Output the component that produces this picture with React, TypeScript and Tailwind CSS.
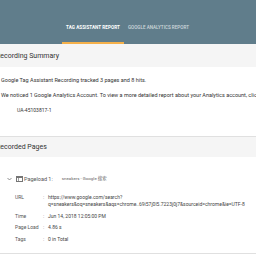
const ROWS = [
  { label: "Time", value: "Jun 14, 2018 12:05:00 PM" },
  { label: "Page Load", value: "4.86 s" },
  { label: "Tags", value: "0 in Total" },
];

function DocIcon() {
  return (
    <svg width="7" height="6" viewBox="0 0 7 6" className="shrink-0">
      <rect x="0.5" y="0.5" width="6" height="5" fill="none" stroke="#757575" strokeWidth="1" />
      <rect x="1" y="1" width="5" height="1" fill="#757575" />
      <rect x="2" y="2" width="1" height="3" fill="#9e9e9e" />
    </svg>
  );
}

export default function App() {
  return (
    <div className="h-[256px] w-[256px] overflow-hidden bg-white font-['Roboto',sans-serif] text-[#333]">
      {/* header tabs */}
      <div className="flex h-[44px] items-end bg-[#607d8b] pl-[62px]">
        <div className="flex h-[30px] items-center border-b-2 border-[#f4b04a] px-[4px] text-[4.6px] font-bold tracking-[0.05px] text-white">
          TAG ASSISTANT REPORT
        </div>
        <div className="flex h-[30px] items-center px-[4px] pb-[2px] text-[4.6px] font-medium text-[#cfd8dc]">
          GOOGLE ANALYTICS REPORT
        </div>
      </div>

      {/* recording summary */}
      <div className="flex h-[23px] items-center bg-[#f5f5f5] pt-[2px]">
        <span className="ml-[-4px] whitespace-nowrap text-[7px]">Recording Summary</span>
      </div>
      <div className="pb-[20px] pl-[1px] pt-[8px] text-[5.5px] whitespace-nowrap">
        <div className="flex h-[10px] items-center">Google Tag Assistant Recording tracked 3 pages and 8 hits.</div>
        <div className="mt-[5px] flex h-[10px] items-center">
          We noticed 1 Google Analytics Account. To view a more detailed report about your Analytics account, click
        </div>
        <div className="mt-[6px] flex h-[10px] items-center pl-[16px] text-[5px]">UA-45103817-1</div>
      </div>

      {/* recorded pages */}
      <div className="flex h-[21px] items-center border-t border-[#e0e0e0] bg-[#f5f5f5]">
        <span className="ml-[-4px] whitespace-nowrap text-[7px]">Recorded Pages</span>
      </div>
      <div className="border-b border-[#e0e0e0] pb-[10px] whitespace-nowrap">
        <div className="mt-[17px] flex h-[10px] items-center pl-[7px]">
          <svg width="5" height="4" viewBox="0 0 5 4" className="mr-[4px]">
            <path d="M0.5 1L2.5 3L4.5 1" fill="none" stroke="#757575" strokeWidth="0.8" />
          </svg>
          <DocIcon />
          <span className="ml-[1px] text-[5.5px] text-[#555]">Pageload 1:</span>
          <span className="ml-[9px] text-[4.4px] text-[#666] font-['Roboto','Noto_Sans_CJK_SC',sans-serif]">sneakers - Google 搜索</span>
        </div>
        <div className="mt-[10px] flex text-[5px] leading-[7px]">
          <div className="w-[28px] shrink-0 pl-[15px] box-content text-[#555]">URL</div>
          <div className="w-[5px] shrink-0 text-[#777]">:</div>
          <div className="text-[#444]">
            <div>https://www.google.com/search?</div>
            <div>q=sneakers&amp;oq=sneakers&amp;aqs=chrome..69i57j0l5.7223j0j7&amp;sourceid=chrome&amp;ie=UTF-8</div>
          </div>
        </div>
        {ROWS.map((r) => (
          <div key={r.label} className="mt-[4.5px] flex text-[5px] leading-[7px]">
            <div className="w-[28px] shrink-0 pl-[15px] box-content text-[#555]">{r.label}</div>
            <div className="w-[5px] shrink-0 text-[#777]">:</div>
            <div className="text-[#444]">{r.value}</div>
          </div>
        ))}
      </div>
    </div>
  );
}
